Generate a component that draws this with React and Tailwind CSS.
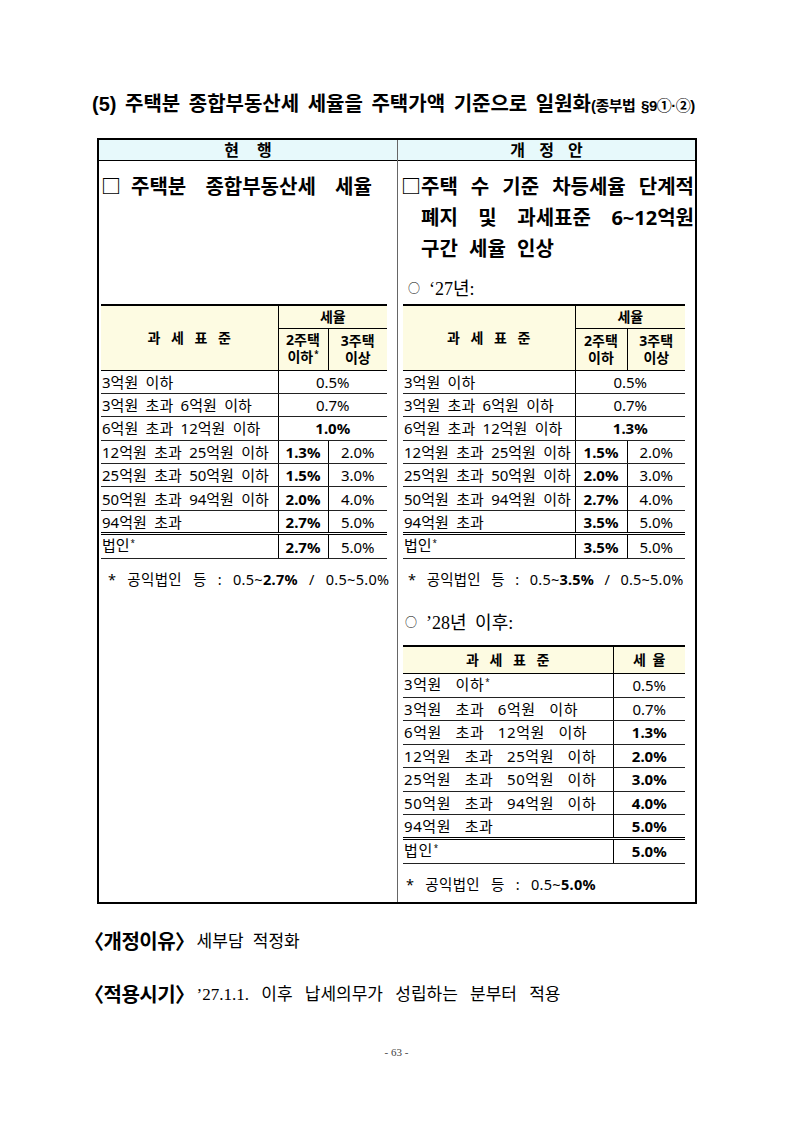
import React from 'react';

const gothic = "font-['Noto_Sans','Noto_Sans_CJK_KR',sans-serif]";
const serif = "font-['Liberation_Serif','Noto_Sans_CJK_KR',serif]";

const currentRows = [
    { label: '3억원 이하', merged: '0.5%' },
    { label: '3억원 초과 6억원 이하', merged: '0.7%' },
    { label: '6억원 초과 12억원 이하', merged: '1.0%', bold: true },
    { label: '12억원 초과 25억원 이하', a: '1.3%', b: '2.0%' },
    { label: '25억원 초과 50억원 이하', a: '1.5%', b: '3.0%' },
    { label: '50억원 초과 94억원 이하', a: '2.0%', b: '4.0%' },
    { label: '94억원 초과', a: '2.7%', b: '5.0%', double: true },
    { label: '법인', star: true, a: '2.7%', b: '5.0%' },
];

const proposedRows = [
    { label: '3억원 이하', merged: '0.5%' },
    { label: '3억원 초과 6억원 이하', merged: '0.7%' },
    { label: '6억원 초과 12억원 이하', merged: '1.3%', bold: true },
    { label: '12억원 초과 25억원 이하', a: '1.5%', b: '2.0%' },
    { label: '25억원 초과 50억원 이하', a: '2.0%', b: '3.0%' },
    { label: '50억원 초과 94억원 이하', a: '2.7%', b: '4.0%' },
    { label: '94억원 초과', a: '3.5%', b: '5.0%', double: true },
    { label: '법인', star: true, a: '3.5%', b: '5.0%' },
];

const laterRows = [
    { label: '3억원 이하', star: true, v: '0.5%' },
    { label: '3억원 초과 6억원 이하', v: '0.7%' },
    { label: '6억원 초과 12억원 이하', v: '1.3%', bold: true },
    { label: '12억원 초과 25억원 이하', v: '2.0%', bold: true },
    { label: '25억원 초과 50억원 이하', v: '3.0%', bold: true },
    { label: '50억원 초과 94억원 이하', v: '4.0%', bold: true },
    { label: '94억원 초과', v: '5.0%', bold: true, double: true },
    { label: '법인', star: true, v: '5.0%', bold: true },
];

function Star() {
    return <span className="relative -top-[5px] text-[8px] ml-[1px]">*</span>;
}

// justified line: words spread over the full width
function Spread({ words, className = '' }) {
    return (
        <div className={`flex justify-between whitespace-nowrap ${className}`}>
            {words.map((w, i) => <span key={i}>{w}</span>)}
        </div>
    );
}

function RateTable({ rows, widths, showStar }) {
    return (
        <table className={`table-fixed border-collapse ${gothic} text-black`} style={{ width: widths.reduce((s, w) => s + w, 0) }}>
            <colgroup>
                {widths.map((w, i) => <col key={i} style={{ width: w }} />)}
            </colgroup>
            <thead>
                <tr className="h-[23px] bg-[#fdfbe2]">
                    <th rowSpan={2} className="border-t-2 border-b border-black text-[14px] font-bold [word-spacing:7px]">과 세 표 준</th>
                    <th colSpan={2} className="border-t-2 border-b border-l border-black text-[14px] font-bold leading-[20px]">세율</th>
                </tr>
                <tr className="h-[42px] bg-[#fdfbe2]">
                    <th className="border-b border-l border-black text-[14px] font-bold leading-[17px]">2주택<br />이하{showStar && <Star />}</th>
                    <th className="border-b border-l border-black text-[14px] font-bold leading-[17px]">3주택<br />이상</th>
                </tr>
            </thead>
            <tbody>
                {rows.map((r, i) => {
                    const line = r.double ? 'border-b-[3px] border-double border-black' : 'border-b border-[#222]';
                    return (
                        <tr key={i} className="h-[23.4px] text-[15px] leading-[20px]">
                            <td className={`${line} pl-[1px] whitespace-nowrap [word-spacing:3.5px]`}>{r.label}{r.star && <Star />}</td>
                            {r.merged ? (
                                <td colSpan={2} className={`${line} border-l border-l-black text-center ${r.bold ? 'font-bold' : ''}`}>{r.merged}</td>
                            ) : (
                                <>
                                    <td className={`${line} border-l border-l-black text-center font-bold`}>{r.a}</td>
                                    <td className={`${line} border-l border-l-black text-center`}>{r.b}</td>
                                </>
                            )}
                        </tr>
                    );
                })}
            </tbody>
        </table>
    );
}

function LaterTable() {
    return (
        <table className={`w-[282px] table-fixed border-collapse ${gothic} text-black`}>
            <colgroup>
                <col style={{ width: 210 }} />
                <col style={{ width: 72 }} />
            </colgroup>
            <thead>
                <tr className="h-[27px] bg-[#fdfbe2]">
                    <th className="border-t-2 border-b border-black text-[14px] font-bold [word-spacing:7px]">과 세 표 준</th>
                    <th className="border-t-2 border-b border-l border-black text-[14px] font-bold [word-spacing:3px]">세 율</th>
                </tr>
            </thead>
            <tbody>
                {laterRows.map((r, i) => {
                    const line = r.double ? 'border-b-[3px] border-double border-black' : 'border-b border-[#222]';
                    return (
                        <tr key={i} className="h-[23.5px] text-[15px] leading-[20px]">
                            <td className={`${line} pl-[1px] whitespace-nowrap tracking-[0.6px] [word-spacing:9px]`}>{r.label}{r.star && <Star />}</td>
                            <td className={`${line} border-l border-l-black text-center ${r.bold ? 'font-bold' : ''}`}>{r.v}</td>
                        </tr>
                    );
                })}
            </tbody>
        </table>
    );
}

export default function App() {
    return (
        <div className="w-[793px] h-[1121px] bg-white text-black relative">
            <div className="pt-[92px] pl-[92px]">
                {/* title */}
                <h1 className="font-['Liberation_Sans','Noto_Sans_CJK_KR',sans-serif] font-bold text-[20px] leading-[24px] [word-spacing:3px] whitespace-nowrap">
                    (5) 주택분 종합부동산세 세율을 주택가액 기준으로 일원화<span className="text-[15px] tracking-[-0.5px] [word-spacing:2px]">(종부법 §9①·②)</span>
                </h1>

                {/* comparison table */}
                <div className="mt-[20px] ml-[5px] w-[600px] border-2 border-black">
                    <div className={`grid grid-cols-[299px_1fr] h-[21px] bg-[#e7f9fb] border-b border-black ${gothic} font-bold text-[16px] leading-[21px]`}>
                        <div className="text-center border-r border-[#666] [word-spacing:14px]">현 행</div>
                        <div className="text-center [word-spacing:10px]">개 정 안</div>
                    </div>

                    <div className="grid grid-cols-[299px_1fr]">
                        {/* row 1 */}
                        <div className="border-r border-[#666] pl-[2px] pt-[10px]">
                            <div className={`${gothic} font-bold text-[20px] leading-[31px] whitespace-nowrap flex`}>
                                <span>□</span>
                                <span className="ml-[10px] [word-spacing:14px]">주택분 종합부동산세 세율</span>
                            </div>
                        </div>
                        <div className="pl-[3px] pt-[10px] pb-[2px]">
                            <Spread className={`${gothic} font-bold text-[20px] leading-[31px] pr-[1px]`} words={['□주택', '수', '기준', '차등세율', '단계적']} />
                            <Spread className={`${gothic} font-bold text-[20px] leading-[31px] pl-[20px] pr-[1px]`} words={['폐지', '및', '과세표준', '6~12억원']} />
                            <div className={`${gothic} font-bold text-[20px] leading-[31px] pl-[20px] [word-spacing:6px]`}>구간 세율 인상</div>
                            <div className="mt-[12px] leading-[26px] pl-[7px] flex items-center">
                                <span className={`${gothic} text-[12px] mr-[9px]`}>○</span>
                                <span className={`${serif} text-[18px]`}>‘27년:</span>
                            </div>
                        </div>

                        {/* row 2: tables */}
                        <div className="border-r border-[#666] pl-[2px]">
                            <RateTable rows={currentRows} widths={[177, 50, 59]} showStar />
                        </div>
                        <div className="pl-[5px]">
                            <RateTable rows={proposedRows} widths={[172, 52, 58]} />
                        </div>

                        {/* row 3: footnotes */}
                        <div className={`border-r border-[#666] pl-[9px] pt-[9px] ${gothic} text-[14.5px] leading-[22px] whitespace-nowrap [word-spacing:7px] tracking-[0.3px]`}>
                            * 공익법인 등 : 0.5~<b>2.7%</b> / 0.5~5.0%
                        </div>
                        <div className={`pl-[10px] pt-[9px] ${gothic} text-[14.5px] leading-[22px] whitespace-nowrap [word-spacing:6.5px] tracking-[0.2px]`}>
                            * 공익법인 등 : 0.5~<b>3.5%</b> / 0.5~5.0%
                        </div>

                        {/* row 4: from '28 */}
                        <div className="border-r border-[#666]" />
                        <div className="pl-[5px] pb-[7px]">
                            <div className="mt-[20px] mb-[9px] leading-[26px] pl-[2px] flex items-center">
                                <span className={`${gothic} text-[12px] mr-[9px]`}>○</span>
                                <span className={`${serif} text-[18px] [word-spacing:4px]`}>’28년 이후:</span>
                            </div>
                            <LaterTable />
                            <div className={`pt-[9px] pl-[3px] ${gothic} text-[14.5px] leading-[22px] whitespace-nowrap [word-spacing:7px] tracking-[0.3px]`}>
                                * 공익법인 등 : 0.5~<b>5.0%</b>
                            </div>
                        </div>
                    </div>
                </div>

                {/* reason / timing */}
                <div className="mt-[25px] -ml-[8px] flex items-center leading-[26px] whitespace-nowrap">
                    <span className={`${gothic} font-bold text-[20px] tracking-[-0.5px]`}>〈개정이유〉</span>
                    <span className={`${serif} text-[17px] ml-[2px] [word-spacing:5px]`}>세부담 적정화</span>
                </div>
                <div className="mt-[27px] -ml-[8px] flex items-center leading-[26px] whitespace-nowrap">
                    <span className={`${gothic} font-bold text-[20px] tracking-[-0.5px]`}>〈적용시기〉</span>
                    <span className={`${serif} text-[17px] ml-[2px] [word-spacing:8px]`}>’27.1.1. 이후 납세의무가 성립하는 분부터 적용</span>
                </div>
            </div>

            <div className={`absolute top-[1044px] left-0 w-full text-center ${serif} text-[11px] text-[#444]`}>- 63 -</div>
        </div>
    );
}
